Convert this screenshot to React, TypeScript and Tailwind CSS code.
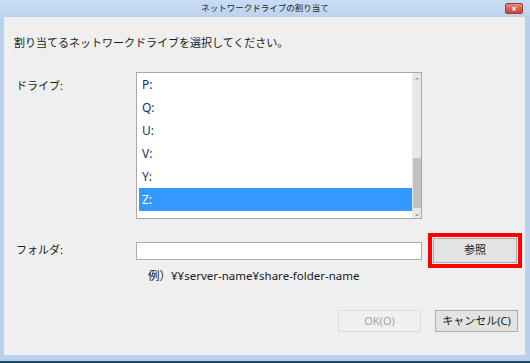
import React from "react";

const drives = ["P:", "Q:", "U:", "V:", "Y:", "Z:"];

export default function App() {
    const font = { fontFamily: '"Noto Sans", "Noto Sans CJK JP", sans-serif' };
    return (
        <div className="w-[530px] h-[363px] bg-[#b9d1ee] flex flex-col overflow-hidden" style={font}>
            {/* Title bar */}
            <div className="h-[17px] relative flex items-center justify-center bg-gradient-to-b from-[#c9dcf3] to-[#bcd3ef]">
                <span className="text-[8.5px] text-[#222] leading-none">ネットワークドライブの割り当て</span>
                <div className="absolute right-[7px] top-[3px] w-[18px] h-[11px] bg-gradient-to-b from-[#e58a7c] to-[#c8402e] border border-[#a33a2c] rounded-[2px] flex items-center justify-center">
                    <span className="text-white text-[9px] leading-none font-bold">×</span>
                </div>
            </div>

            {/* Client area */}
            <div className="flex-1 ml-[4px] mr-[5px] mb-[6px] bg-[#efefef] relative">
                <p className="pl-[10px] pt-[19px] text-[11px] leading-[14px] text-[#1a1a1a]">
                    割り当てるネットワークドライブを選択してください。
                </p>

                {/* Drive list */}
                <div className="flex mt-[22px]">
                    <div className="w-[132px] pl-[12px] pt-[6px] text-[11px] text-[#1a1a1a]">ドライブ:</div>
                    <div className="w-[286px] h-[147px] bg-white border border-[#a8a8a8] flex">
                        <div className="flex-1 flex flex-col pl-[2px]">
                            {drives.map((d) => (
                                <div
                                    key={d}
                                    className={
                                        d === "Z:"
                                            ? "h-[23px] flex items-center pl-[3px] bg-[#3399ff] text-white text-[12px]"
                                            : "h-[23px] flex items-center pl-[3px] text-[#1c2f63] text-[12px]"
                                    }
                                >
                                    {d}
                                </div>
                            ))}
                        </div>
                        <div className="w-[9px] bg-[#e8e8e8] flex flex-col items-center">
                            <div className="h-[14px] flex items-center justify-center text-[7px] text-[#555] leading-none">⌃</div>
                            <div className="flex-1 flex flex-col justify-end">
                                <div className="w-[8px] h-[50px] bg-[#c2c2c2]"></div>
                            </div>
                            <div className="h-[10px] flex items-center justify-center text-[7px] text-[#555] leading-none">⌄</div>
                        </div>
                    </div>
                </div>

                {/* Folder row */}
                <div className="flex items-center mt-[14px]">
                    <div className="w-[132px] pl-[12px] text-[11px] text-[#1a1a1a]">フォルダ:</div>
                    <div className="w-[286px] h-[18px] bg-white border border-[#abadb3]"></div>
                    <div className="ml-[6px] border-[4px] border-[#ff0000] p-[1px]">
                        <div className="w-[84px] h-[25px] bg-[#e3e3e3] border border-[#acacac] flex items-center justify-center text-[11px] text-[#1a1a1a]">
                            参照
                        </div>
                    </div>
                </div>

                <p className="pl-[144px] mt-[1px] text-[11.5px] leading-[14px] text-[#1a1a1a]">例）¥¥server-name¥share-folder-name</p>

                {/* Buttons */}
                <div className="flex justify-end mt-[27px] pr-[7px] gap-[14px]">
                    <div className="w-[83px] h-[22px] bg-[#f0f0f0] border border-[#dcdcdc] flex items-center justify-center text-[11px] text-[#a3a3a3]">
                        OK(O)
                    </div>
                    <div className="w-[83px] h-[22px] bg-[#e3e3e3] border border-[#acacac] flex items-center justify-center text-[11px] text-[#1a1a1a]">
                        キャンセル(C)
                    </div>
                </div>
            </div>
            <div className="h-[2px] bg-[#1d4d5c]"></div>
        </div>
    );
}
